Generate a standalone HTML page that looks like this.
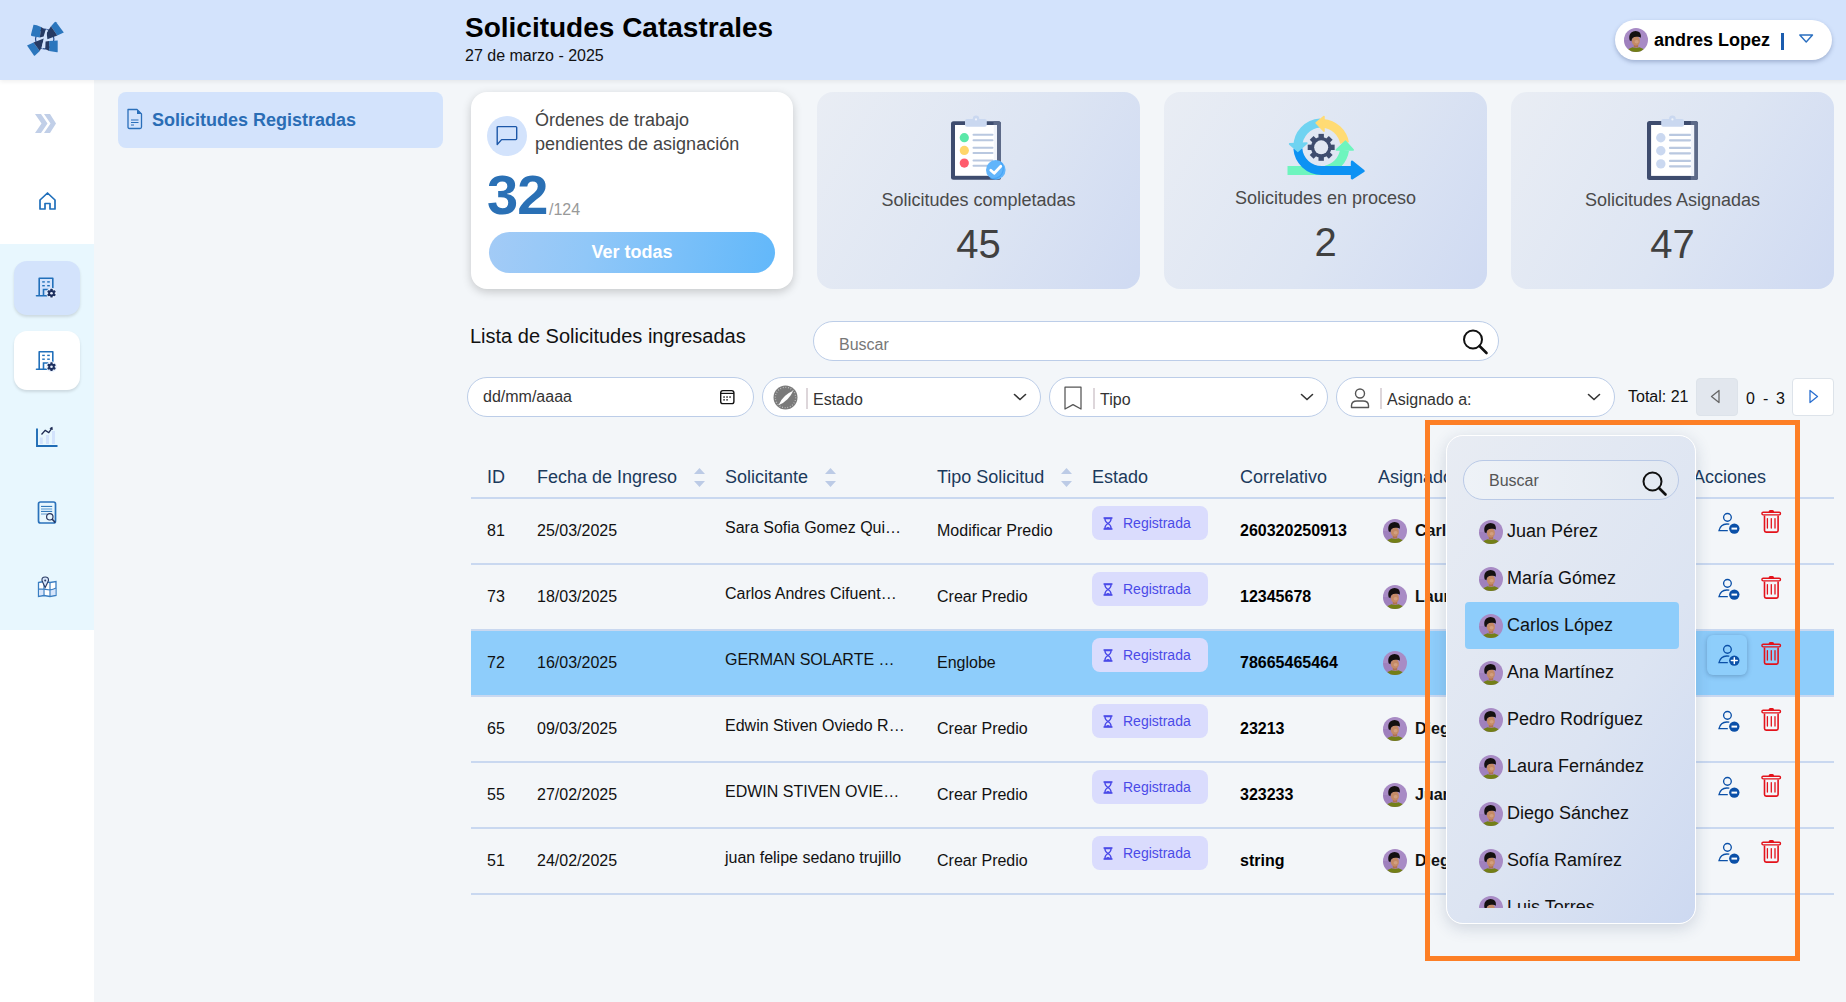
<!DOCTYPE html>
<html><head><meta charset="utf-8">
<style>
*{box-sizing:border-box;margin:0;padding:0}
html,body{width:1846px;height:1002px;overflow:hidden}
body{font-family:"Liberation Sans",sans-serif;background:#f3f6f9;position:relative;color:#000}
.a{position:absolute;white-space:nowrap}
svg.a{overflow:visible}
#header{left:0;top:0;width:1846px;height:80px;background:#d3e3fc;box-shadow:0 2px 4px rgba(0,0,0,0.06);z-index:2}
#sidebar{left:0;top:80px;width:94px;height:922px;background:#fff}
#iconsec{left:0;top:244px;width:94px;height:386px;background:#e8f7fe}
.sbtn{position:absolute;left:14px;width:66px;border-radius:13px;box-shadow:0 2px 3px rgba(0,0,0,0.12)}
.menuitem{left:118px;top:92px;width:325px;height:56px;background:#d3e3fc;border-radius:8px}
.title{left:465px;top:11px;font-size:28px;font-weight:bold;line-height:34px}
.subtitle{left:465px;top:47px;font-size:16px;line-height:18px;color:#111}
.card{position:absolute;top:92px;width:323px;height:197px;border-radius:16px}
.card1{left:471px;width:322px;background:#fff;box-shadow:0 3px 10px rgba(0,0,0,0.19)}
.cardg{background:linear-gradient(120deg,#e9edf4 0%,#dde5f3 55%,#cfdaf2 100%)}
.cardlbl{position:absolute;left:0;width:100%;text-align:center;font-size:18px;color:#4a4a4a;line-height:20px}
.cardnum{position:absolute;left:0;width:100%;text-align:center;font-size:40px;color:#404040;line-height:44px}
.pill{position:absolute;background:#fff;border:1px solid #bccde8;border-radius:22px}
.ph{position:absolute;font-size:16px;color:#333;line-height:18px}
.th{position:absolute;top:466px;font-size:18px;color:#1b3a5c;line-height:22px}
.row{position:absolute;left:471px;width:1363px;height:66px;border-bottom:2px solid #c9d8f0}
.cell{position:absolute;font-size:16px;color:#111;line-height:18px}
.badge{position:absolute;left:621px;top:7px;width:116px;height:34px;background:#dadcfd;border-radius:8px;color:#4a4ae8;font-size:14px;line-height:34px;padding-left:31px}
.corr{position:absolute;left:769px;top:23px;font-size:16px;font-weight:bold;line-height:18px}
.av{position:absolute;width:24px;height:24px;border-radius:50%;overflow:hidden}
</style></head><body>
<!-- HEADER -->
<div id="header" class="a">
  <svg class="a" style="left:0;top:0" width="90" height="80" viewBox="0 0 90 80">
    <g transform="translate(20,15)">
      <ellipse cx="24.7" cy="24" rx="9.2" ry="9.8" fill="none" stroke="#2a4f8f" stroke-width="1.2"/>
      <path d="M13.5 9.7 Q16 9.6 21.1 12.1 L19.8 22.5 L11.5 20.9 Q10.8 20.5 11 19.5Z" fill="#2b76bd"/>
      <path d="M21.1 12.1 L24.3 14 L25.6 15 L23.6 21.5 L19.8 22.5Z" fill="#263a63"/>
      <path d="M31 11.2 L34.8 7 Q35.5 6.5 36.2 7.2 L43.8 17.5 L37.3 20.4Z" fill="#2b76bd"/>
      <path d="M31 11.2 L37.3 20.4 L27.4 24.3 L26.6 18Z" fill="#263a63"/>
      <path d="M7 30.5 L13.5 27.4 L19.8 35.9 L15 40.5 Q14.4 41 13.9 40.4Z" fill="#2b76bd"/>
      <path d="M13.5 27.4 L23.8 23.4 L21.6 32.3 L19.8 35.9Z" fill="#263a63"/>
      <path d="M29.2 26 L37.7 25.6 L37.7 36.8 Q37.7 37.4 37 37.3 L29.2 36Z" fill="#2b76bd"/>
      <path d="M25.6 26.5 L29.2 26 L29.2 36 L25.2 34.1Z" fill="#263a63"/>
      <path d="M27 14.5 L22.2 33.5" stroke="#d3e3fc" stroke-width="1.4"/>
    </g>
  </svg>
  <div class="a title">Solicitudes Catastrales</div>
  <div class="a subtitle">27 de marzo - 2025</div>
  <div class="a" style="left:1615px;top:20px;width:217px;height:40px;background:#fff;border-radius:20px;box-shadow:0 2px 4px rgba(60,80,130,0.35)"></div>
  <div class="a av" style="left:1624px;top:28px"><svg width="24" height="24" viewBox="0 0 24 24"><rect width="24" height="24" fill="#a88bc5"/><rect x="0" y="12" width="12" height="12" fill="#9a7ab8" opacity="0.6"/><rect x="9.8" y="14.5" width="4.4" height="5" fill="#b07250"/><path d="M1.5 24 Q4 20.3 8.5 19.3 Q12 20.6 15.5 19.3 Q20 20.3 22.5 24Z" fill="#737f17"/><ellipse cx="11.9" cy="12.9" rx="4" ry="4.9" fill="#c48a66"/><ellipse cx="12.6" cy="13.8" rx="2" ry="1.8" fill="#d9a88a" opacity="0.7"/><path d="M5.6 12.2 Q4.4 7.5 7 4.8 Q10 2.2 14 3.4 Q17.5 4.6 16.8 9.8 Q15.2 8.3 12.8 8.8 Q10.5 8.6 8.6 10 Q7.6 11.5 7.4 13.2Z" fill="#141010"/></svg></div>
  <div class="a" style="left:1654px;top:29px;font-size:18px;font-weight:bold;line-height:22px">andres Lopez</div>
  <div class="a" style="left:1781px;top:33px;width:2.5px;height:17px;background:#1b5cae"></div>
  <svg class="a" style="left:1797px;top:33px" width="18" height="12" viewBox="0 0 18 12"><path d="M2.8 2 H15.5 L9.2 9Z" fill="none" stroke="#2a6fc0" stroke-width="1.4" stroke-linejoin="round"/></svg>
</div>

<!-- SIDEBAR -->
<div id="sidebar" class="a"></div>
<div id="iconsec" class="a"></div>
<svg class="a" style="left:0;top:80px" width="94" height="560" viewBox="0 80 94 560">
  <path d="M35 114 H41 L47.5 123.5 L41 133 H35 L41.5 123.5Z M44 114 H50 L56 123.5 L50 133 H44 L50.5 123.5Z" fill="#c1cfe8"/>
  <path d="M40 209 V200 L47.5 193 L55 200 V209 H50 V203.5 H45 V209Z" fill="none" stroke="#1f6fbb" stroke-width="1.7" stroke-linejoin="round"/>
</svg>
<div class="sbtn" style="top:261px;height:54px;background:#d3e3fc"></div>
<div class="sbtn" style="top:331px;height:59px;background:#fff"></div>
<svg class="a" style="left:0;top:240px" width="94" height="400" viewBox="0 240 94 400">
  <defs>
    <g id="bld">
      <path d="M39.2 295.5 V278.2 H52.8 V288.5" fill="none" stroke="#2270ba" stroke-width="1.6" stroke-linejoin="round"/>
      <path d="M36.5 295.8 H47" stroke="#2270ba" stroke-width="1.6" stroke-linecap="round"/>
      <path d="M43.5 295.5 V289.5 H48.5" fill="none" stroke="#2270ba" stroke-width="1.6"/>
      <rect x="42.2" y="281.2" width="2.6" height="1.4" fill="#2270ba"/><rect x="47.2" y="281.2" width="2.6" height="1.4" fill="#2270ba"/>
      <rect x="42.2" y="285" width="2.6" height="1.4" fill="#2270ba"/><rect x="47.2" y="285" width="2.6" height="1.4" fill="#2270ba"/>
      <circle cx="51.5" cy="293.2" r="5.4" fill="#e6eefc" opacity="0.9"/>
      <g transform="translate(51.5,293.2)" fill="#1d2f5e">
        <circle r="3.2"/>
        <rect x="-1.1" y="-4.4" width="2.2" height="8.8" rx="0.5"/>
        <rect x="-1.1" y="-4.4" width="2.2" height="8.8" rx="0.5" transform="rotate(60)"/>
        <rect x="-1.1" y="-4.4" width="2.2" height="8.8" rx="0.5" transform="rotate(120)"/>
      </g>
      <circle cx="51.5" cy="293.2" r="1.3" fill="#e6eefc"/>
    </g>
  </defs>
  <use href="#bld"/>
  <use href="#bld" transform="translate(0,73.5)"/>
  <!-- chart -->
  <g>
    <path d="M37 428.5 V446 H57.5" fill="none" stroke="#1f6cb5" stroke-width="1.9"/>
    <rect x="39.8" y="437.5" width="3" height="6.5" fill="#d3e3fc"/>
    <rect x="46" y="435" width="3" height="9" fill="#d3e3fc"/>
    <rect x="52" y="431" width="3" height="13" fill="#d3e3fc"/>
    <path d="M41.5 434.5 L45.2 430.4 L48.8 432.6 L51.2 429.2" fill="none" stroke="#1d2a52" stroke-width="1.3"/>
    <path d="M49.8 428.5 L52.2 427.3 L52.2 430" fill="#1d2a52" stroke="#1d2a52" stroke-width="0.8"/>
  </g>
  <!-- doc search -->
  <g>
    <rect x="38.5" y="502" width="17" height="21" rx="2" fill="none" stroke="#2a72bb" stroke-width="1.7"/>
    <path d="M41 506.4 H52.2" stroke="#1f6cb5" stroke-width="1"/>
    <path d="M41 509 H52.2" stroke="#7fb0dc" stroke-width="1.4"/>
    <path d="M41 511.4 H52.2" stroke="#1f6cb5" stroke-width="1"/>
    <path d="M41 514 H47" stroke="#5c96cc" stroke-width="1"/>
    <circle cx="49.8" cy="516.8" r="3.2" fill="#e8f7fe" stroke="#28345c" stroke-width="1.2"/>
    <path d="M52 519 L55.3 522.5" stroke="#28345c" stroke-width="1.6"/>
  </g>
  <!-- map -->
  <g>
    <path d="M38.5 582.5 L44 581.5 L50 582.5 L56 581.5 V595.5 L50 596.5 L44 595.5 L38.5 596.5Z" fill="#fff" stroke="#3a7ec2" stroke-width="1.3"/>
    <rect x="39.2" y="589.5" width="4.2" height="5.5" fill="#d6e5fb"/><rect x="50.5" y="589" width="4.8" height="6" fill="#d6e5fb"/>
    <path d="M44 581.5 V595.5 M50 582.5 V596.5 M38.5 589.2 Q44 588.8 50 590 Q53 589.5 56 588" fill="none" stroke="#3a7ec2" stroke-width="1.2"/>
    <path d="M45.2 587.5 Q43 583 42 580.5 Q41.5 577 45.2 577 Q48.8 577 48.5 580.5 Q47.5 583 45.2 587.5Z" fill="#d6e5fb" stroke="#2b3d66" stroke-width="1.1"/>
    <circle cx="45.2" cy="580.5" r="1" fill="#2b3d66"/>
  </g>
</svg>

<!-- PANEL -->
<div class="a menuitem"></div>
<svg class="a" style="left:126px;top:108px" width="18" height="22" viewBox="0 0 18 22">
  <path d="M2 1.5 H11 L15.5 6 V19 Q15.5 20.5 14 20.5 H3.5 Q2 20.5 2 19Z" fill="none" stroke="#2a6fba" stroke-width="1.3" stroke-linejoin="round"/>
  <path d="M11 1.5 V6 H15.5" fill="#2a6fba"/>
  <path d="M5 12 H12.5 M5 14.5 H12.5 M5 17 H8" stroke="#2a6fba" stroke-width="1.1"/>
</svg>
<div class="a" style="left:152px;top:110px;font-size:18px;font-weight:bold;color:#2a6db5;line-height:20px">Solicitudes Registradas</div>

<!-- CARDS -->
<div class="card card1"></div>
<div class="a" style="left:487px;top:116px;width:40px;height:40px;border-radius:50%;background:#d3e3fc"></div>
<svg class="a" style="left:495px;top:124px" width="24" height="24" viewBox="0 0 24 24"><path d="M2.2 3.6 Q2.2 2.6 3.2 2.6 H20.7 Q21.7 2.6 21.7 3.6 V14.6 Q21.7 15.6 20.7 15.6 H6.6 L2.2 20.5Z" fill="none" stroke="#1c57a8" stroke-width="1.4" stroke-linejoin="round"/></svg>
<div class="a" style="left:535px;top:108px;font-size:18px;line-height:24px;color:#444">Órdenes de trabajo<br>pendientes de asignación</div>
<div class="a" style="left:487px;top:165px;font-size:56px;font-weight:bold;line-height:60px;color:#2a70b5;letter-spacing:-1px">32</div>
<div class="a" style="left:549px;top:201px;font-size:16px;line-height:18px;color:#999">/124</div>
<div class="a" style="left:489px;top:232px;width:286px;height:41px;border-radius:21px;background:linear-gradient(100deg,#a3cbf6 0%,#90c7f8 35%,#62b8fa 100%);color:#fff;font-size:18px;font-weight:bold;text-align:center;line-height:41px">Ver todas</div>

<div class="card cardg" style="left:817px"></div>
<svg class="a" style="left:940px;top:110px" width="70" height="75" viewBox="940 110 70 75">
  <rect x="951" y="121.2" width="50" height="58.5" rx="2.5" fill="#3e4c6e"/>
  <path d="M993.5 121.2 H998.5 Q1001 121.2 1001 123.7 V177.2 Q1001 179.7 998.5 179.7 H993.5Z" fill="#5d6a88"/>
  <rect x="955" y="125" width="42" height="50.8" fill="#fff"/>
  <rect x="993.8" y="125" width="3.2" height="50.8" fill="#f2f5fb"/>
  <rect x="965" y="119" width="21.8" height="7.8" rx="2" fill="#cad8f0"/>
  <circle cx="976" cy="118.6" r="3.2" fill="#cad8f0"/>
  <circle cx="976" cy="119.4" r="1.1" fill="#eef2fa"/>
  <circle cx="964.3" cy="137.7" r="4.6" fill="#5be8a8"/>
  <circle cx="964.3" cy="150.4" r="4.6" fill="#ffd66a"/>
  <circle cx="964.3" cy="163.1" r="4.6" fill="#ff5c6c"/>
  <g stroke="#b9c8e0" stroke-width="2" stroke-linecap="round"><path d="M973.5 134.7 H992.5 M973.5 140.3 H992.5 M973.5 147.8 H992.5 M973.5 153 H992.5 M973.5 160.5 H992.5 M973.5 165.8 H988"/></g>
  <circle cx="995.8" cy="169.9" r="9.8" fill="#62b5fb"/>
  <path d="M1000.5 162 A9.8 9.8 0 0 1 990 178" fill="none" stroke="#3a9ef5" stroke-width="1.2" opacity="0.7"/>
  <path d="M990.8 170.3 L994.2 173.3 L1000.8 166.2" fill="none" stroke="#fff" stroke-width="2.8" stroke-linecap="round" stroke-linejoin="round"/>
</svg>
<div class="cardlbl" style="left:817px;width:323px;top:190px">Solicitudes completadas</div>
<div class="cardnum" style="left:817px;width:323px;top:222px">45</div>

<div class="card cardg" style="left:1164px"></div>
<svg class="a" style="left:1270px;top:100px" width="110" height="90" viewBox="0 0 1225 1002" >
  <g transform="translate(0,0)">
    <path d="M310 520 A265 265 0 0 1 560 255" fill="none" stroke="#6fd3f1" stroke-width="100"/>
    <path d="M590 260 A265 265 0 0 1 830 480" fill="none" stroke="#ffdb74" stroke-width="100"/>
    <path d="M830 560 A265 265 0 0 1 620 780" fill="none" stroke="#6ef5be" stroke-width="100"/>
    <rect x="195" y="735" width="400" height="100" fill="#6ef5be"/>
    <path d="M310 540 A265 265 0 0 0 575 785 H930" fill="none" stroke="#0d92f3" stroke-width="100"/>
    <path d="M915 690 L1040 790 L915 870Z" fill="#0d92f3" stroke="#0d92f3" stroke-width="30" stroke-linejoin="round"/>
    <path d="M220 490 L310 570 L410 480Z" fill="#6fd3f1" stroke="#6fd3f1" stroke-width="20" stroke-linejoin="round"/>
    <path d="M600 185 L515 255 L600 345Z" fill="#ffdb74" stroke="#ffdb74" stroke-width="20" stroke-linejoin="round"/>
    <path d="M740 555 L840 460 L925 555Z" fill="#6ef5be" stroke="#6ef5be" stroke-width="20" stroke-linejoin="round"/>
    <g fill="#3e4c6e">
      <circle cx="570" cy="527" r="115"/>
      <g transform="translate(570,527)">
        <rect x="-30" y="-150" width="60" height="300"/>
        <rect x="-30" y="-150" width="60" height="300" transform="rotate(45)"/>
        <rect x="-30" y="-150" width="60" height="300" transform="rotate(90)"/>
        <rect x="-30" y="-150" width="60" height="300" transform="rotate(135)"/>
      </g>
    </g>
    <circle cx="570" cy="527" r="78" fill="#e1e7f2"/>
  </g>
</svg>
<div class="cardlbl" style="left:1164px;width:323px;top:188px">Solicitudes en proceso</div>
<div class="cardnum" style="left:1164px;width:323px;top:220px">2</div>

<div class="card cardg" style="left:1511px"></div>
<svg class="a" style="left:1640px;top:110px" width="70" height="75" viewBox="1640 110 70 75">
  <rect x="1647" y="121" width="51" height="59" rx="2.5" fill="#3e4c6e"/>
  <path d="M1690.8 121 H1695.5 Q1698 121 1698 123.5 V177.5 Q1698 180 1695.5 180 H1690.8Z" fill="#5d6a88"/>
  <rect x="1651.1" y="125" width="43" height="50.9" fill="#fff"/>
  <rect x="1690.8" y="125" width="3.3" height="50.9" fill="#f2f5fb"/>
  <rect x="1661.2" y="119" width="22.8" height="7.8" rx="2" fill="#cad8f0"/>
  <circle cx="1672.4" cy="118.8" r="3.3" fill="#cad8f0"/>
  <circle cx="1672.4" cy="119.4" r="1.1" fill="#eef2fa"/>
  <circle cx="1660.8" cy="137.7" r="4.7" fill="#cad8f0"/>
  <circle cx="1660.8" cy="150.8" r="4.7" fill="#cad8f0"/>
  <circle cx="1660.8" cy="163.9" r="4.7" fill="#cad8f0"/>
  <g stroke="#b9c8e0" stroke-width="2.2" stroke-linecap="round"><path d="M1670 134.9 H1690 M1670 140.3 H1690 M1670 147.9 H1690 M1670 153.3 H1690 M1670 160.9 H1690 M1670 166.3 H1690"/></g>
</svg>
<div class="cardlbl" style="left:1511px;width:323px;top:190px">Solicitudes Asignadas</div>
<div class="cardnum" style="left:1511px;width:323px;top:222px">47</div>

<!-- LIST HEADER -->
<div class="a" style="left:470px;top:325px;font-size:20px;line-height:22px;color:#111">Lista de Solicitudes ingresadas</div>
<div class="pill" style="left:813px;top:321px;width:686px;height:40px;border-radius:20px"></div>
<div class="ph" style="left:839px;top:336px;color:#777">Buscar</div>
<svg class="a" style="left:1460px;top:327px" width="30" height="30" viewBox="0 0 30 30"><circle cx="13" cy="12.5" r="9" fill="none" stroke="#111" stroke-width="2"/><path d="M19.5 19 L26.5 26" stroke="#111" stroke-width="2.6" stroke-linecap="round"/></svg>

<!-- FILTERS -->
<div class="pill" style="left:467px;top:377px;width:287px;height:40px;border-radius:20px"></div>
<div class="ph" style="left:483px;top:388px">dd/mm/aaaa</div>
<svg class="a" style="left:718px;top:388px" width="18" height="18" viewBox="0 0 18 18"><rect x="2.7" y="2.6" width="13.2" height="13" rx="2.2" fill="none" stroke="#111" stroke-width="1.4"/><path d="M2.7 5.4 H15.9" stroke="#111" stroke-width="1.2"/><g fill="#222"><rect x="5.3" y="8.3" width="1.5" height="1.5"/><rect x="8.3" y="8.3" width="1.5" height="1.5"/><rect x="11.3" y="8.3" width="1.5" height="1.5"/><rect x="5.3" y="11.1" width="1.5" height="1.5"/><rect x="8.3" y="11.1" width="1.5" height="1.5"/></g></svg>

<div class="pill" style="left:762px;top:377px;width:279px;height:40px;border-radius:20px"></div>
<svg class="a" style="left:773px;top:385px" width="25" height="25" viewBox="0 0 25 25"><circle cx="12.5" cy="12.5" r="12" fill="#7a7a7a"/><circle cx="12.5" cy="12.5" r="10.2" fill="none" stroke="#c8c8c8" stroke-width="1.3" stroke-dasharray="0.8 1.85"/><path d="M20.2 5.8 Q15.9 16 5.5 20.2 Q9.8 10 20.2 5.8Z" fill="#fff"/></svg>
<div class="a" style="left:806px;top:388px;width:2px;height:21px;background:#ddd6da"></div>
<div class="ph" style="left:813px;top:391px">Estado</div>
<svg class="a" style="left:1012px;top:391px" width="16" height="12" viewBox="0 0 16 12"><path d="M2.5 3.5 L8 8.5 L13.5 3.5" fill="none" stroke="#333" stroke-width="1.6" stroke-linecap="round"/></svg>

<div class="pill" style="left:1049px;top:377px;width:279px;height:40px;border-radius:20px"></div>
<svg class="a" style="left:1062px;top:385px" width="22" height="26" viewBox="0 0 22 26"><path d="M3 2.2 H19 V24 L11 19.6 L3 24Z" fill="none" stroke="#555" stroke-width="1.25" stroke-linejoin="round"/></svg>
<div class="a" style="left:1093px;top:388px;width:2px;height:21px;background:#ddd6da"></div>
<div class="ph" style="left:1100px;top:391px">Tipo</div>
<svg class="a" style="left:1299px;top:391px" width="16" height="12" viewBox="0 0 16 12"><path d="M2.5 3.5 L8 8.5 L13.5 3.5" fill="none" stroke="#333" stroke-width="1.6" stroke-linecap="round"/></svg>

<div class="pill" style="left:1336px;top:377px;width:279px;height:40px;border-radius:20px"></div>
<svg class="a" style="left:1349px;top:387px" width="22" height="22" viewBox="0 0 22 22"><circle cx="11" cy="6.5" r="4.5" fill="none" stroke="#555" stroke-width="1.4"/><path d="M2.5 20.5 V18.5 Q2.5 14 8 14 H14 Q19.5 14 19.5 18.5 V20.5Z" fill="none" stroke="#555" stroke-width="1.4" stroke-linejoin="round"/></svg>
<div class="a" style="left:1380px;top:388px;width:2px;height:21px;background:#ddd6da"></div>
<div class="ph" style="left:1387px;top:391px">Asignado a:</div>
<svg class="a" style="left:1586px;top:391px" width="16" height="12" viewBox="0 0 16 12"><path d="M2.5 3.5 L8 8.5 L13.5 3.5" fill="none" stroke="#333" stroke-width="1.6" stroke-linecap="round"/></svg>

<div class="ph" style="left:1628px;top:388px;color:#111">Total: 21</div>
<div class="a" style="left:1696px;top:378px;width:42px;height:38px;background:#e2e7ee;border:1px solid #dde3ea;border-radius:4px"></div>
<svg class="a" style="left:1708px;top:388px" width="16" height="18" viewBox="0 0 16 18"><path d="M11 2.5 V14.5 L3.5 8.5Z" fill="none" stroke="#666" stroke-width="1.3" stroke-linejoin="round"/></svg>
<div class="ph" style="left:1746px;top:390px;color:#111">0</div>
<div class="ph" style="left:1763px;top:390px;color:#111">-</div>
<div class="ph" style="left:1776px;top:390px;color:#111">3</div>
<div class="a" style="left:1792px;top:378px;width:42px;height:38px;background:#fff;border:1px solid #dde3ea;border-radius:4px"></div>
<svg class="a" style="left:1805px;top:388px" width="16" height="18" viewBox="0 0 16 18"><path d="M5 2.5 V14.5 L12.5 8.5Z" fill="none" stroke="#2a6fd0" stroke-width="1.3" stroke-linejoin="round"/></svg>

<!-- TABLE -->
<div class="th" style="left:487px">ID</div>
<div class="th" style="left:537px">Fecha de Ingreso</div>
<div class="th" style="left:725px">Solicitante</div>
<div class="th" style="left:937px">Tipo Solicitud</div>
<div class="th" style="left:1092px">Estado</div>
<div class="th" style="left:1240px">Correlativo</div>
<div class="th" style="left:1378px">Asignado a</div>
<div class="th" style="left:1693px">Acciones</div>
<svg class="a" style="left:0;top:0" width="1846" height="500" viewBox="0 0 1846 500"><g fill="#bccbe6">
<path d="M694 474 L699.5 468 L705 474Z M694 481 L699.5 487 L705 481Z"/>
<path d="M825 474 L830.5 468 L836 474Z M825 481 L830.5 487 L836 481Z"/>
<path d="M1061 474 L1066.5 468 L1072 474Z M1061 481 L1066.5 487 L1072 481Z"/>
</g></svg>
<div class="a" style="left:471px;top:497px;width:1363px;height:2px;background:#c9d8f0"></div>
<div class="row" style="top:499px;">
<div class="cell" style="left:16px;top:23px">81</div>
<div class="cell" style="left:66px;top:23px">25/03/2025</div>
<div class="cell" style="left:254px;top:20px">Sara Sofia Gomez Qui…</div>
<div class="cell" style="left:466px;top:23px">Modificar Predio</div>
<div class="badge"><svg style="position:absolute;left:10px;top:11px" width="12" height="13" viewBox="0 0 12 13"><path d="M1.5 1 H10.5 M1.5 12 H10.5" stroke="#4a4ae8" stroke-width="1.5"/><path d="M2.8 1.5 Q3 5 6 6.5 Q9 5 9.2 1.5Z M2.8 11.5 Q3 8 6 6.5 Q9 8 9.2 11.5Z" fill="none" stroke="#4a4ae8" stroke-width="1.3"/><path d="M4 11.3 Q6 8.5 8 11.3Z" fill="#4a4ae8"/></svg>Registrada</div>
<div class="corr">260320250913</div>
<div class="av" style="left:912px;top:20px"><svg width="24" height="24" viewBox="0 0 24 24"><rect width="24" height="24" fill="#a88bc5"/><rect x="0" y="12" width="12" height="12" fill="#9a7ab8" opacity="0.6"/><rect x="9.8" y="14.5" width="4.4" height="5" fill="#b07250"/><path d="M1.5 24 Q4 20.3 8.5 19.3 Q12 20.6 15.5 19.3 Q20 20.3 22.5 24Z" fill="#737f17"/><ellipse cx="11.9" cy="12.9" rx="4" ry="4.9" fill="#c48a66"/><ellipse cx="12.6" cy="13.8" rx="2" ry="1.8" fill="#d9a88a" opacity="0.7"/><path d="M5.6 12.2 Q4.4 7.5 7 4.8 Q10 2.2 14 3.4 Q17.5 4.6 16.8 9.8 Q15.2 8.3 12.8 8.8 Q10.5 8.6 8.6 10 Q7.6 11.5 7.4 13.2Z" fill="#141010"/></svg></div>
<div class="cell" style="left:944px;top:23px;font-weight:bold">Carlos López</div>
</div>
<div class="row" style="top:565px;">
<div class="cell" style="left:16px;top:23px">73</div>
<div class="cell" style="left:66px;top:23px">18/03/2025</div>
<div class="cell" style="left:254px;top:20px">Carlos Andres Cifuent…</div>
<div class="cell" style="left:466px;top:23px">Crear Predio</div>
<div class="badge"><svg style="position:absolute;left:10px;top:11px" width="12" height="13" viewBox="0 0 12 13"><path d="M1.5 1 H10.5 M1.5 12 H10.5" stroke="#4a4ae8" stroke-width="1.5"/><path d="M2.8 1.5 Q3 5 6 6.5 Q9 5 9.2 1.5Z M2.8 11.5 Q3 8 6 6.5 Q9 8 9.2 11.5Z" fill="none" stroke="#4a4ae8" stroke-width="1.3"/><path d="M4 11.3 Q6 8.5 8 11.3Z" fill="#4a4ae8"/></svg>Registrada</div>
<div class="corr">12345678</div>
<div class="av" style="left:912px;top:20px"><svg width="24" height="24" viewBox="0 0 24 24"><rect width="24" height="24" fill="#a88bc5"/><rect x="0" y="12" width="12" height="12" fill="#9a7ab8" opacity="0.6"/><rect x="9.8" y="14.5" width="4.4" height="5" fill="#b07250"/><path d="M1.5 24 Q4 20.3 8.5 19.3 Q12 20.6 15.5 19.3 Q20 20.3 22.5 24Z" fill="#737f17"/><ellipse cx="11.9" cy="12.9" rx="4" ry="4.9" fill="#c48a66"/><ellipse cx="12.6" cy="13.8" rx="2" ry="1.8" fill="#d9a88a" opacity="0.7"/><path d="M5.6 12.2 Q4.4 7.5 7 4.8 Q10 2.2 14 3.4 Q17.5 4.6 16.8 9.8 Q15.2 8.3 12.8 8.8 Q10.5 8.6 8.6 10 Q7.6 11.5 7.4 13.2Z" fill="#141010"/></svg></div>
<div class="cell" style="left:944px;top:23px;font-weight:bold">Laura Fernández</div>
</div>
<div class="row" style="top:631px;background:#8ecdfb;">
<div class="cell" style="left:16px;top:23px">72</div>
<div class="cell" style="left:66px;top:23px">16/03/2025</div>
<div class="cell" style="left:254px;top:20px">GERMAN SOLARTE …</div>
<div class="cell" style="left:466px;top:23px">Englobe</div>
<div class="badge"><svg style="position:absolute;left:10px;top:11px" width="12" height="13" viewBox="0 0 12 13"><path d="M1.5 1 H10.5 M1.5 12 H10.5" stroke="#4a4ae8" stroke-width="1.5"/><path d="M2.8 1.5 Q3 5 6 6.5 Q9 5 9.2 1.5Z M2.8 11.5 Q3 8 6 6.5 Q9 8 9.2 11.5Z" fill="none" stroke="#4a4ae8" stroke-width="1.3"/><path d="M4 11.3 Q6 8.5 8 11.3Z" fill="#4a4ae8"/></svg>Registrada</div>
<div class="corr">78665465464</div>
<div class="av" style="left:912px;top:20px"><svg width="24" height="24" viewBox="0 0 24 24"><rect width="24" height="24" fill="#a88bc5"/><rect x="0" y="12" width="12" height="12" fill="#9a7ab8" opacity="0.6"/><rect x="9.8" y="14.5" width="4.4" height="5" fill="#b07250"/><path d="M1.5 24 Q4 20.3 8.5 19.3 Q12 20.6 15.5 19.3 Q20 20.3 22.5 24Z" fill="#737f17"/><ellipse cx="11.9" cy="12.9" rx="4" ry="4.9" fill="#c48a66"/><ellipse cx="12.6" cy="13.8" rx="2" ry="1.8" fill="#d9a88a" opacity="0.7"/><path d="M5.6 12.2 Q4.4 7.5 7 4.8 Q10 2.2 14 3.4 Q17.5 4.6 16.8 9.8 Q15.2 8.3 12.8 8.8 Q10.5 8.6 8.6 10 Q7.6 11.5 7.4 13.2Z" fill="#141010"/></svg></div>
<div class="cell" style="left:944px;top:23px;font-weight:bold"></div>
</div>
<div class="row" style="top:697px;">
<div class="cell" style="left:16px;top:23px">65</div>
<div class="cell" style="left:66px;top:23px">09/03/2025</div>
<div class="cell" style="left:254px;top:20px">Edwin Stiven Oviedo R…</div>
<div class="cell" style="left:466px;top:23px">Crear Predio</div>
<div class="badge"><svg style="position:absolute;left:10px;top:11px" width="12" height="13" viewBox="0 0 12 13"><path d="M1.5 1 H10.5 M1.5 12 H10.5" stroke="#4a4ae8" stroke-width="1.5"/><path d="M2.8 1.5 Q3 5 6 6.5 Q9 5 9.2 1.5Z M2.8 11.5 Q3 8 6 6.5 Q9 8 9.2 11.5Z" fill="none" stroke="#4a4ae8" stroke-width="1.3"/><path d="M4 11.3 Q6 8.5 8 11.3Z" fill="#4a4ae8"/></svg>Registrada</div>
<div class="corr">23213</div>
<div class="av" style="left:912px;top:20px"><svg width="24" height="24" viewBox="0 0 24 24"><rect width="24" height="24" fill="#a88bc5"/><rect x="0" y="12" width="12" height="12" fill="#9a7ab8" opacity="0.6"/><rect x="9.8" y="14.5" width="4.4" height="5" fill="#b07250"/><path d="M1.5 24 Q4 20.3 8.5 19.3 Q12 20.6 15.5 19.3 Q20 20.3 22.5 24Z" fill="#737f17"/><ellipse cx="11.9" cy="12.9" rx="4" ry="4.9" fill="#c48a66"/><ellipse cx="12.6" cy="13.8" rx="2" ry="1.8" fill="#d9a88a" opacity="0.7"/><path d="M5.6 12.2 Q4.4 7.5 7 4.8 Q10 2.2 14 3.4 Q17.5 4.6 16.8 9.8 Q15.2 8.3 12.8 8.8 Q10.5 8.6 8.6 10 Q7.6 11.5 7.4 13.2Z" fill="#141010"/></svg></div>
<div class="cell" style="left:944px;top:23px;font-weight:bold">Diego Sánchez</div>
</div>
<div class="row" style="top:763px;">
<div class="cell" style="left:16px;top:23px">55</div>
<div class="cell" style="left:66px;top:23px">27/02/2025</div>
<div class="cell" style="left:254px;top:20px">EDWIN STIVEN OVIE…</div>
<div class="cell" style="left:466px;top:23px">Crear Predio</div>
<div class="badge"><svg style="position:absolute;left:10px;top:11px" width="12" height="13" viewBox="0 0 12 13"><path d="M1.5 1 H10.5 M1.5 12 H10.5" stroke="#4a4ae8" stroke-width="1.5"/><path d="M2.8 1.5 Q3 5 6 6.5 Q9 5 9.2 1.5Z M2.8 11.5 Q3 8 6 6.5 Q9 8 9.2 11.5Z" fill="none" stroke="#4a4ae8" stroke-width="1.3"/><path d="M4 11.3 Q6 8.5 8 11.3Z" fill="#4a4ae8"/></svg>Registrada</div>
<div class="corr">323233</div>
<div class="av" style="left:912px;top:20px"><svg width="24" height="24" viewBox="0 0 24 24"><rect width="24" height="24" fill="#a88bc5"/><rect x="0" y="12" width="12" height="12" fill="#9a7ab8" opacity="0.6"/><rect x="9.8" y="14.5" width="4.4" height="5" fill="#b07250"/><path d="M1.5 24 Q4 20.3 8.5 19.3 Q12 20.6 15.5 19.3 Q20 20.3 22.5 24Z" fill="#737f17"/><ellipse cx="11.9" cy="12.9" rx="4" ry="4.9" fill="#c48a66"/><ellipse cx="12.6" cy="13.8" rx="2" ry="1.8" fill="#d9a88a" opacity="0.7"/><path d="M5.6 12.2 Q4.4 7.5 7 4.8 Q10 2.2 14 3.4 Q17.5 4.6 16.8 9.8 Q15.2 8.3 12.8 8.8 Q10.5 8.6 8.6 10 Q7.6 11.5 7.4 13.2Z" fill="#141010"/></svg></div>
<div class="cell" style="left:944px;top:23px;font-weight:bold">Juan Pérez</div>
</div>
<div class="row" style="top:829px;">
<div class="cell" style="left:16px;top:23px">51</div>
<div class="cell" style="left:66px;top:23px">24/02/2025</div>
<div class="cell" style="left:254px;top:20px">juan felipe sedano trujillo</div>
<div class="cell" style="left:466px;top:23px">Crear Predio</div>
<div class="badge"><svg style="position:absolute;left:10px;top:11px" width="12" height="13" viewBox="0 0 12 13"><path d="M1.5 1 H10.5 M1.5 12 H10.5" stroke="#4a4ae8" stroke-width="1.5"/><path d="M2.8 1.5 Q3 5 6 6.5 Q9 5 9.2 1.5Z M2.8 11.5 Q3 8 6 6.5 Q9 8 9.2 11.5Z" fill="none" stroke="#4a4ae8" stroke-width="1.3"/><path d="M4 11.3 Q6 8.5 8 11.3Z" fill="#4a4ae8"/></svg>Registrada</div>
<div class="corr">string</div>
<div class="av" style="left:912px;top:20px"><svg width="24" height="24" viewBox="0 0 24 24"><rect width="24" height="24" fill="#a88bc5"/><rect x="0" y="12" width="12" height="12" fill="#9a7ab8" opacity="0.6"/><rect x="9.8" y="14.5" width="4.4" height="5" fill="#b07250"/><path d="M1.5 24 Q4 20.3 8.5 19.3 Q12 20.6 15.5 19.3 Q20 20.3 22.5 24Z" fill="#737f17"/><ellipse cx="11.9" cy="12.9" rx="4" ry="4.9" fill="#c48a66"/><ellipse cx="12.6" cy="13.8" rx="2" ry="1.8" fill="#d9a88a" opacity="0.7"/><path d="M5.6 12.2 Q4.4 7.5 7 4.8 Q10 2.2 14 3.4 Q17.5 4.6 16.8 9.8 Q15.2 8.3 12.8 8.8 Q10.5 8.6 8.6 10 Q7.6 11.5 7.4 13.2Z" fill="#141010"/></svg></div>
<div class="cell" style="left:944px;top:23px;font-weight:bold">Diego Sánchez</div>
</div>
<!-- ACTIONS -->
<svg class="a" style="left:1715px;top:511px" width="26" height="26" viewBox="0 0 26 26"><circle cx="12.45" cy="6.35" r="3.85" fill="none" stroke="#0b50a8" stroke-width="1.35"/><path d="M14.3 13.1 Q13.5 13 11.8 13 Q5.5 13.2 4 19.6 H12.8" fill="none" stroke="#0b50a8" stroke-width="1.35"/><circle cx="19.3" cy="17.6" r="5.2" fill="#0b50a8"/><path d="M16.5 17.6 H22.1" stroke="#fff" stroke-width="2" /></svg><svg class="a" style="left:1760px;top:508px" width="24" height="28" viewBox="0 0 24 28"><path d="M8.6 3.9 Q8.6 2.1 10.2 2.1 H12.5 Q14.1 2.1 14.1 3.9Z" fill="#e3121b"/><rect x="1.9" y="4.2" width="18.6" height="2.7" rx="1.3" fill="none" stroke="#e3121b" stroke-width="1.4"/><path d="M4.5 7.6 V22.5 Q4.5 24.1 6.1 24.1 H16.5 Q18.1 24.1 18.1 22.5 V7.6" fill="none" stroke="#e3121b" stroke-width="1.6"/><path d="M7.4 10.6 V20 M11.3 10.6 V20 M15 10.6 V20" stroke="#e3121b" stroke-width="1.3" stroke-linecap="round"/></svg>
<svg class="a" style="left:1715px;top:577px" width="26" height="26" viewBox="0 0 26 26"><circle cx="12.45" cy="6.35" r="3.85" fill="none" stroke="#0b50a8" stroke-width="1.35"/><path d="M14.3 13.1 Q13.5 13 11.8 13 Q5.5 13.2 4 19.6 H12.8" fill="none" stroke="#0b50a8" stroke-width="1.35"/><circle cx="19.3" cy="17.6" r="5.2" fill="#0b50a8"/><path d="M16.5 17.6 H22.1" stroke="#fff" stroke-width="2" /></svg><svg class="a" style="left:1760px;top:574px" width="24" height="28" viewBox="0 0 24 28"><path d="M8.6 3.9 Q8.6 2.1 10.2 2.1 H12.5 Q14.1 2.1 14.1 3.9Z" fill="#e3121b"/><rect x="1.9" y="4.2" width="18.6" height="2.7" rx="1.3" fill="none" stroke="#e3121b" stroke-width="1.4"/><path d="M4.5 7.6 V22.5 Q4.5 24.1 6.1 24.1 H16.5 Q18.1 24.1 18.1 22.5 V7.6" fill="none" stroke="#e3121b" stroke-width="1.6"/><path d="M7.4 10.6 V20 M11.3 10.6 V20 M15 10.6 V20" stroke="#e3121b" stroke-width="1.3" stroke-linecap="round"/></svg>
<div class="a" style="left:1707px;top:635px;width:40px;height:40px;background:#8ecefb;border-radius:6px;box-shadow:0 1px 5px rgba(30,60,100,0.35)"></div>
<svg class="a" style="left:1715px;top:643px" width="26" height="26" viewBox="0 0 26 26"><circle cx="12.45" cy="6.35" r="3.85" fill="none" stroke="#0b50a8" stroke-width="1.35"/><path d="M14.3 13.1 Q13.5 13 11.8 13 Q5.5 13.2 4 19.6 H12.8" fill="none" stroke="#0b50a8" stroke-width="1.35"/><circle cx="19.3" cy="17.6" r="5.2" fill="#0b50a8"/><path d="M16.4 17.6 H22.2 M19.3 14.7 V20.5" stroke="#fff" stroke-width="1.5" stroke-linecap="round"/></svg><svg class="a" style="left:1760px;top:640px" width="24" height="28" viewBox="0 0 24 28"><path d="M8.6 3.9 Q8.6 2.1 10.2 2.1 H12.5 Q14.1 2.1 14.1 3.9Z" fill="#e3121b"/><rect x="1.9" y="4.2" width="18.6" height="2.7" rx="1.3" fill="none" stroke="#e3121b" stroke-width="1.4"/><path d="M4.5 7.6 V22.5 Q4.5 24.1 6.1 24.1 H16.5 Q18.1 24.1 18.1 22.5 V7.6" fill="none" stroke="#e3121b" stroke-width="1.6"/><path d="M7.4 10.6 V20 M11.3 10.6 V20 M15 10.6 V20" stroke="#e3121b" stroke-width="1.3" stroke-linecap="round"/></svg>
<svg class="a" style="left:1715px;top:709px" width="26" height="26" viewBox="0 0 26 26"><circle cx="12.45" cy="6.35" r="3.85" fill="none" stroke="#0b50a8" stroke-width="1.35"/><path d="M14.3 13.1 Q13.5 13 11.8 13 Q5.5 13.2 4 19.6 H12.8" fill="none" stroke="#0b50a8" stroke-width="1.35"/><circle cx="19.3" cy="17.6" r="5.2" fill="#0b50a8"/><path d="M16.5 17.6 H22.1" stroke="#fff" stroke-width="2" /></svg><svg class="a" style="left:1760px;top:706px" width="24" height="28" viewBox="0 0 24 28"><path d="M8.6 3.9 Q8.6 2.1 10.2 2.1 H12.5 Q14.1 2.1 14.1 3.9Z" fill="#e3121b"/><rect x="1.9" y="4.2" width="18.6" height="2.7" rx="1.3" fill="none" stroke="#e3121b" stroke-width="1.4"/><path d="M4.5 7.6 V22.5 Q4.5 24.1 6.1 24.1 H16.5 Q18.1 24.1 18.1 22.5 V7.6" fill="none" stroke="#e3121b" stroke-width="1.6"/><path d="M7.4 10.6 V20 M11.3 10.6 V20 M15 10.6 V20" stroke="#e3121b" stroke-width="1.3" stroke-linecap="round"/></svg>
<svg class="a" style="left:1715px;top:775px" width="26" height="26" viewBox="0 0 26 26"><circle cx="12.45" cy="6.35" r="3.85" fill="none" stroke="#0b50a8" stroke-width="1.35"/><path d="M14.3 13.1 Q13.5 13 11.8 13 Q5.5 13.2 4 19.6 H12.8" fill="none" stroke="#0b50a8" stroke-width="1.35"/><circle cx="19.3" cy="17.6" r="5.2" fill="#0b50a8"/><path d="M16.5 17.6 H22.1" stroke="#fff" stroke-width="2" /></svg><svg class="a" style="left:1760px;top:772px" width="24" height="28" viewBox="0 0 24 28"><path d="M8.6 3.9 Q8.6 2.1 10.2 2.1 H12.5 Q14.1 2.1 14.1 3.9Z" fill="#e3121b"/><rect x="1.9" y="4.2" width="18.6" height="2.7" rx="1.3" fill="none" stroke="#e3121b" stroke-width="1.4"/><path d="M4.5 7.6 V22.5 Q4.5 24.1 6.1 24.1 H16.5 Q18.1 24.1 18.1 22.5 V7.6" fill="none" stroke="#e3121b" stroke-width="1.6"/><path d="M7.4 10.6 V20 M11.3 10.6 V20 M15 10.6 V20" stroke="#e3121b" stroke-width="1.3" stroke-linecap="round"/></svg>
<svg class="a" style="left:1715px;top:841px" width="26" height="26" viewBox="0 0 26 26"><circle cx="12.45" cy="6.35" r="3.85" fill="none" stroke="#0b50a8" stroke-width="1.35"/><path d="M14.3 13.1 Q13.5 13 11.8 13 Q5.5 13.2 4 19.6 H12.8" fill="none" stroke="#0b50a8" stroke-width="1.35"/><circle cx="19.3" cy="17.6" r="5.2" fill="#0b50a8"/><path d="M16.5 17.6 H22.1" stroke="#fff" stroke-width="2" /></svg><svg class="a" style="left:1760px;top:838px" width="24" height="28" viewBox="0 0 24 28"><path d="M8.6 3.9 Q8.6 2.1 10.2 2.1 H12.5 Q14.1 2.1 14.1 3.9Z" fill="#e3121b"/><rect x="1.9" y="4.2" width="18.6" height="2.7" rx="1.3" fill="none" stroke="#e3121b" stroke-width="1.4"/><path d="M4.5 7.6 V22.5 Q4.5 24.1 6.1 24.1 H16.5 Q18.1 24.1 18.1 22.5 V7.6" fill="none" stroke="#e3121b" stroke-width="1.6"/><path d="M7.4 10.6 V20 M11.3 10.6 V20 M15 10.6 V20" stroke="#e3121b" stroke-width="1.3" stroke-linecap="round"/></svg>
<!-- ORANGE BOX -->
<div class="a" style="left:1425px;top:420px;width:375px;height:541px;border:5px solid #fd7f26"></div>
<!-- POPUP -->
<div class="a" style="left:1446px;top:435px;width:250px;height:489px;border-radius:17px;border:1.5px solid #fff;background:linear-gradient(125deg,#e8ecf3 0%,#dce4f2 60%,#cdd9f1 100%);box-shadow:0 4px 16px rgba(40,60,100,0.18);overflow:hidden">
  <div class="a" style="left:16px;top:24px;width:216px;height:40px;border-radius:20px;border:1px solid #b9c9e6;background:linear-gradient(90deg,#eef2f7,#e3e9f2)"></div>
  <div class="a" style="left:42px;top:36px;font-size:16px;line-height:18px;color:#555">Buscar</div>
  <svg class="a" style="left:193px;top:33px" width="30" height="30" viewBox="0 0 30 30"><circle cx="12.5" cy="12.5" r="9" fill="none" stroke="#111" stroke-width="2"/><path d="M19 19 L25.5 25.5" stroke="#111" stroke-width="2.6" stroke-linecap="round"/></svg>
  <div class="a" style="left:0;top:75px;width:250px;height:397px;overflow:hidden">
    <div class="a" style="left:18px;top:91px;width:214px;height:47px;background:#8ecdfb;border-radius:4px"></div>
    <div class="av" style="left:32px;top:9px"><svg width="24" height="24" viewBox="0 0 24 24"><rect width="24" height="24" fill="#a88bc5"/><rect x="0" y="12" width="12" height="12" fill="#9a7ab8" opacity="0.6"/><rect x="9.8" y="14.5" width="4.4" height="5" fill="#b07250"/><path d="M1.5 24 Q4 20.3 8.5 19.3 Q12 20.6 15.5 19.3 Q20 20.3 22.5 24Z" fill="#737f17"/><ellipse cx="11.9" cy="12.9" rx="4" ry="4.9" fill="#c48a66"/><ellipse cx="12.6" cy="13.8" rx="2" ry="1.8" fill="#d9a88a" opacity="0.7"/><path d="M5.6 12.2 Q4.4 7.5 7 4.8 Q10 2.2 14 3.4 Q17.5 4.6 16.8 9.8 Q15.2 8.3 12.8 8.8 Q10.5 8.6 8.6 10 Q7.6 11.5 7.4 13.2Z" fill="#141010"/></svg></div><div class="a" style="left:60px;top:9px;font-size:18px;line-height:22px;color:#111">Juan Pérez</div>
    <div class="av" style="left:32px;top:56px"><svg width="24" height="24" viewBox="0 0 24 24"><rect width="24" height="24" fill="#a88bc5"/><rect x="0" y="12" width="12" height="12" fill="#9a7ab8" opacity="0.6"/><rect x="9.8" y="14.5" width="4.4" height="5" fill="#b07250"/><path d="M1.5 24 Q4 20.3 8.5 19.3 Q12 20.6 15.5 19.3 Q20 20.3 22.5 24Z" fill="#737f17"/><ellipse cx="11.9" cy="12.9" rx="4" ry="4.9" fill="#c48a66"/><ellipse cx="12.6" cy="13.8" rx="2" ry="1.8" fill="#d9a88a" opacity="0.7"/><path d="M5.6 12.2 Q4.4 7.5 7 4.8 Q10 2.2 14 3.4 Q17.5 4.6 16.8 9.8 Q15.2 8.3 12.8 8.8 Q10.5 8.6 8.6 10 Q7.6 11.5 7.4 13.2Z" fill="#141010"/></svg></div><div class="a" style="left:60px;top:56px;font-size:18px;line-height:22px;color:#111">María Gómez</div>
    <div class="av" style="left:32px;top:103px"><svg width="24" height="24" viewBox="0 0 24 24"><rect width="24" height="24" fill="#a88bc5"/><rect x="0" y="12" width="12" height="12" fill="#9a7ab8" opacity="0.6"/><rect x="9.8" y="14.5" width="4.4" height="5" fill="#b07250"/><path d="M1.5 24 Q4 20.3 8.5 19.3 Q12 20.6 15.5 19.3 Q20 20.3 22.5 24Z" fill="#737f17"/><ellipse cx="11.9" cy="12.9" rx="4" ry="4.9" fill="#c48a66"/><ellipse cx="12.6" cy="13.8" rx="2" ry="1.8" fill="#d9a88a" opacity="0.7"/><path d="M5.6 12.2 Q4.4 7.5 7 4.8 Q10 2.2 14 3.4 Q17.5 4.6 16.8 9.8 Q15.2 8.3 12.8 8.8 Q10.5 8.6 8.6 10 Q7.6 11.5 7.4 13.2Z" fill="#141010"/></svg></div><div class="a" style="left:60px;top:103px;font-size:18px;line-height:22px;color:#111">Carlos López</div>
    <div class="av" style="left:32px;top:150px"><svg width="24" height="24" viewBox="0 0 24 24"><rect width="24" height="24" fill="#a88bc5"/><rect x="0" y="12" width="12" height="12" fill="#9a7ab8" opacity="0.6"/><rect x="9.8" y="14.5" width="4.4" height="5" fill="#b07250"/><path d="M1.5 24 Q4 20.3 8.5 19.3 Q12 20.6 15.5 19.3 Q20 20.3 22.5 24Z" fill="#737f17"/><ellipse cx="11.9" cy="12.9" rx="4" ry="4.9" fill="#c48a66"/><ellipse cx="12.6" cy="13.8" rx="2" ry="1.8" fill="#d9a88a" opacity="0.7"/><path d="M5.6 12.2 Q4.4 7.5 7 4.8 Q10 2.2 14 3.4 Q17.5 4.6 16.8 9.8 Q15.2 8.3 12.8 8.8 Q10.5 8.6 8.6 10 Q7.6 11.5 7.4 13.2Z" fill="#141010"/></svg></div><div class="a" style="left:60px;top:150px;font-size:18px;line-height:22px;color:#111">Ana Martínez</div>
    <div class="av" style="left:32px;top:197px"><svg width="24" height="24" viewBox="0 0 24 24"><rect width="24" height="24" fill="#a88bc5"/><rect x="0" y="12" width="12" height="12" fill="#9a7ab8" opacity="0.6"/><rect x="9.8" y="14.5" width="4.4" height="5" fill="#b07250"/><path d="M1.5 24 Q4 20.3 8.5 19.3 Q12 20.6 15.5 19.3 Q20 20.3 22.5 24Z" fill="#737f17"/><ellipse cx="11.9" cy="12.9" rx="4" ry="4.9" fill="#c48a66"/><ellipse cx="12.6" cy="13.8" rx="2" ry="1.8" fill="#d9a88a" opacity="0.7"/><path d="M5.6 12.2 Q4.4 7.5 7 4.8 Q10 2.2 14 3.4 Q17.5 4.6 16.8 9.8 Q15.2 8.3 12.8 8.8 Q10.5 8.6 8.6 10 Q7.6 11.5 7.4 13.2Z" fill="#141010"/></svg></div><div class="a" style="left:60px;top:197px;font-size:18px;line-height:22px;color:#111">Pedro Rodríguez</div>
    <div class="av" style="left:32px;top:244px"><svg width="24" height="24" viewBox="0 0 24 24"><rect width="24" height="24" fill="#a88bc5"/><rect x="0" y="12" width="12" height="12" fill="#9a7ab8" opacity="0.6"/><rect x="9.8" y="14.5" width="4.4" height="5" fill="#b07250"/><path d="M1.5 24 Q4 20.3 8.5 19.3 Q12 20.6 15.5 19.3 Q20 20.3 22.5 24Z" fill="#737f17"/><ellipse cx="11.9" cy="12.9" rx="4" ry="4.9" fill="#c48a66"/><ellipse cx="12.6" cy="13.8" rx="2" ry="1.8" fill="#d9a88a" opacity="0.7"/><path d="M5.6 12.2 Q4.4 7.5 7 4.8 Q10 2.2 14 3.4 Q17.5 4.6 16.8 9.8 Q15.2 8.3 12.8 8.8 Q10.5 8.6 8.6 10 Q7.6 11.5 7.4 13.2Z" fill="#141010"/></svg></div><div class="a" style="left:60px;top:244px;font-size:18px;line-height:22px;color:#111">Laura Fernández</div>
    <div class="av" style="left:32px;top:291px"><svg width="24" height="24" viewBox="0 0 24 24"><rect width="24" height="24" fill="#a88bc5"/><rect x="0" y="12" width="12" height="12" fill="#9a7ab8" opacity="0.6"/><rect x="9.8" y="14.5" width="4.4" height="5" fill="#b07250"/><path d="M1.5 24 Q4 20.3 8.5 19.3 Q12 20.6 15.5 19.3 Q20 20.3 22.5 24Z" fill="#737f17"/><ellipse cx="11.9" cy="12.9" rx="4" ry="4.9" fill="#c48a66"/><ellipse cx="12.6" cy="13.8" rx="2" ry="1.8" fill="#d9a88a" opacity="0.7"/><path d="M5.6 12.2 Q4.4 7.5 7 4.8 Q10 2.2 14 3.4 Q17.5 4.6 16.8 9.8 Q15.2 8.3 12.8 8.8 Q10.5 8.6 8.6 10 Q7.6 11.5 7.4 13.2Z" fill="#141010"/></svg></div><div class="a" style="left:60px;top:291px;font-size:18px;line-height:22px;color:#111">Diego Sánchez</div>
    <div class="av" style="left:32px;top:338px"><svg width="24" height="24" viewBox="0 0 24 24"><rect width="24" height="24" fill="#a88bc5"/><rect x="0" y="12" width="12" height="12" fill="#9a7ab8" opacity="0.6"/><rect x="9.8" y="14.5" width="4.4" height="5" fill="#b07250"/><path d="M1.5 24 Q4 20.3 8.5 19.3 Q12 20.6 15.5 19.3 Q20 20.3 22.5 24Z" fill="#737f17"/><ellipse cx="11.9" cy="12.9" rx="4" ry="4.9" fill="#c48a66"/><ellipse cx="12.6" cy="13.8" rx="2" ry="1.8" fill="#d9a88a" opacity="0.7"/><path d="M5.6 12.2 Q4.4 7.5 7 4.8 Q10 2.2 14 3.4 Q17.5 4.6 16.8 9.8 Q15.2 8.3 12.8 8.8 Q10.5 8.6 8.6 10 Q7.6 11.5 7.4 13.2Z" fill="#141010"/></svg></div><div class="a" style="left:60px;top:338px;font-size:18px;line-height:22px;color:#111">Sofía Ramírez</div>
    <div class="av" style="left:32px;top:385px"><svg width="24" height="24" viewBox="0 0 24 24"><rect width="24" height="24" fill="#a88bc5"/><rect x="0" y="12" width="12" height="12" fill="#9a7ab8" opacity="0.6"/><rect x="9.8" y="14.5" width="4.4" height="5" fill="#b07250"/><path d="M1.5 24 Q4 20.3 8.5 19.3 Q12 20.6 15.5 19.3 Q20 20.3 22.5 24Z" fill="#737f17"/><ellipse cx="11.9" cy="12.9" rx="4" ry="4.9" fill="#c48a66"/><ellipse cx="12.6" cy="13.8" rx="2" ry="1.8" fill="#d9a88a" opacity="0.7"/><path d="M5.6 12.2 Q4.4 7.5 7 4.8 Q10 2.2 14 3.4 Q17.5 4.6 16.8 9.8 Q15.2 8.3 12.8 8.8 Q10.5 8.6 8.6 10 Q7.6 11.5 7.4 13.2Z" fill="#141010"/></svg></div><div class="a" style="left:60px;top:385px;font-size:18px;line-height:22px;color:#111">Luis Torres</div>
  </div>
</div>
</body></html>
